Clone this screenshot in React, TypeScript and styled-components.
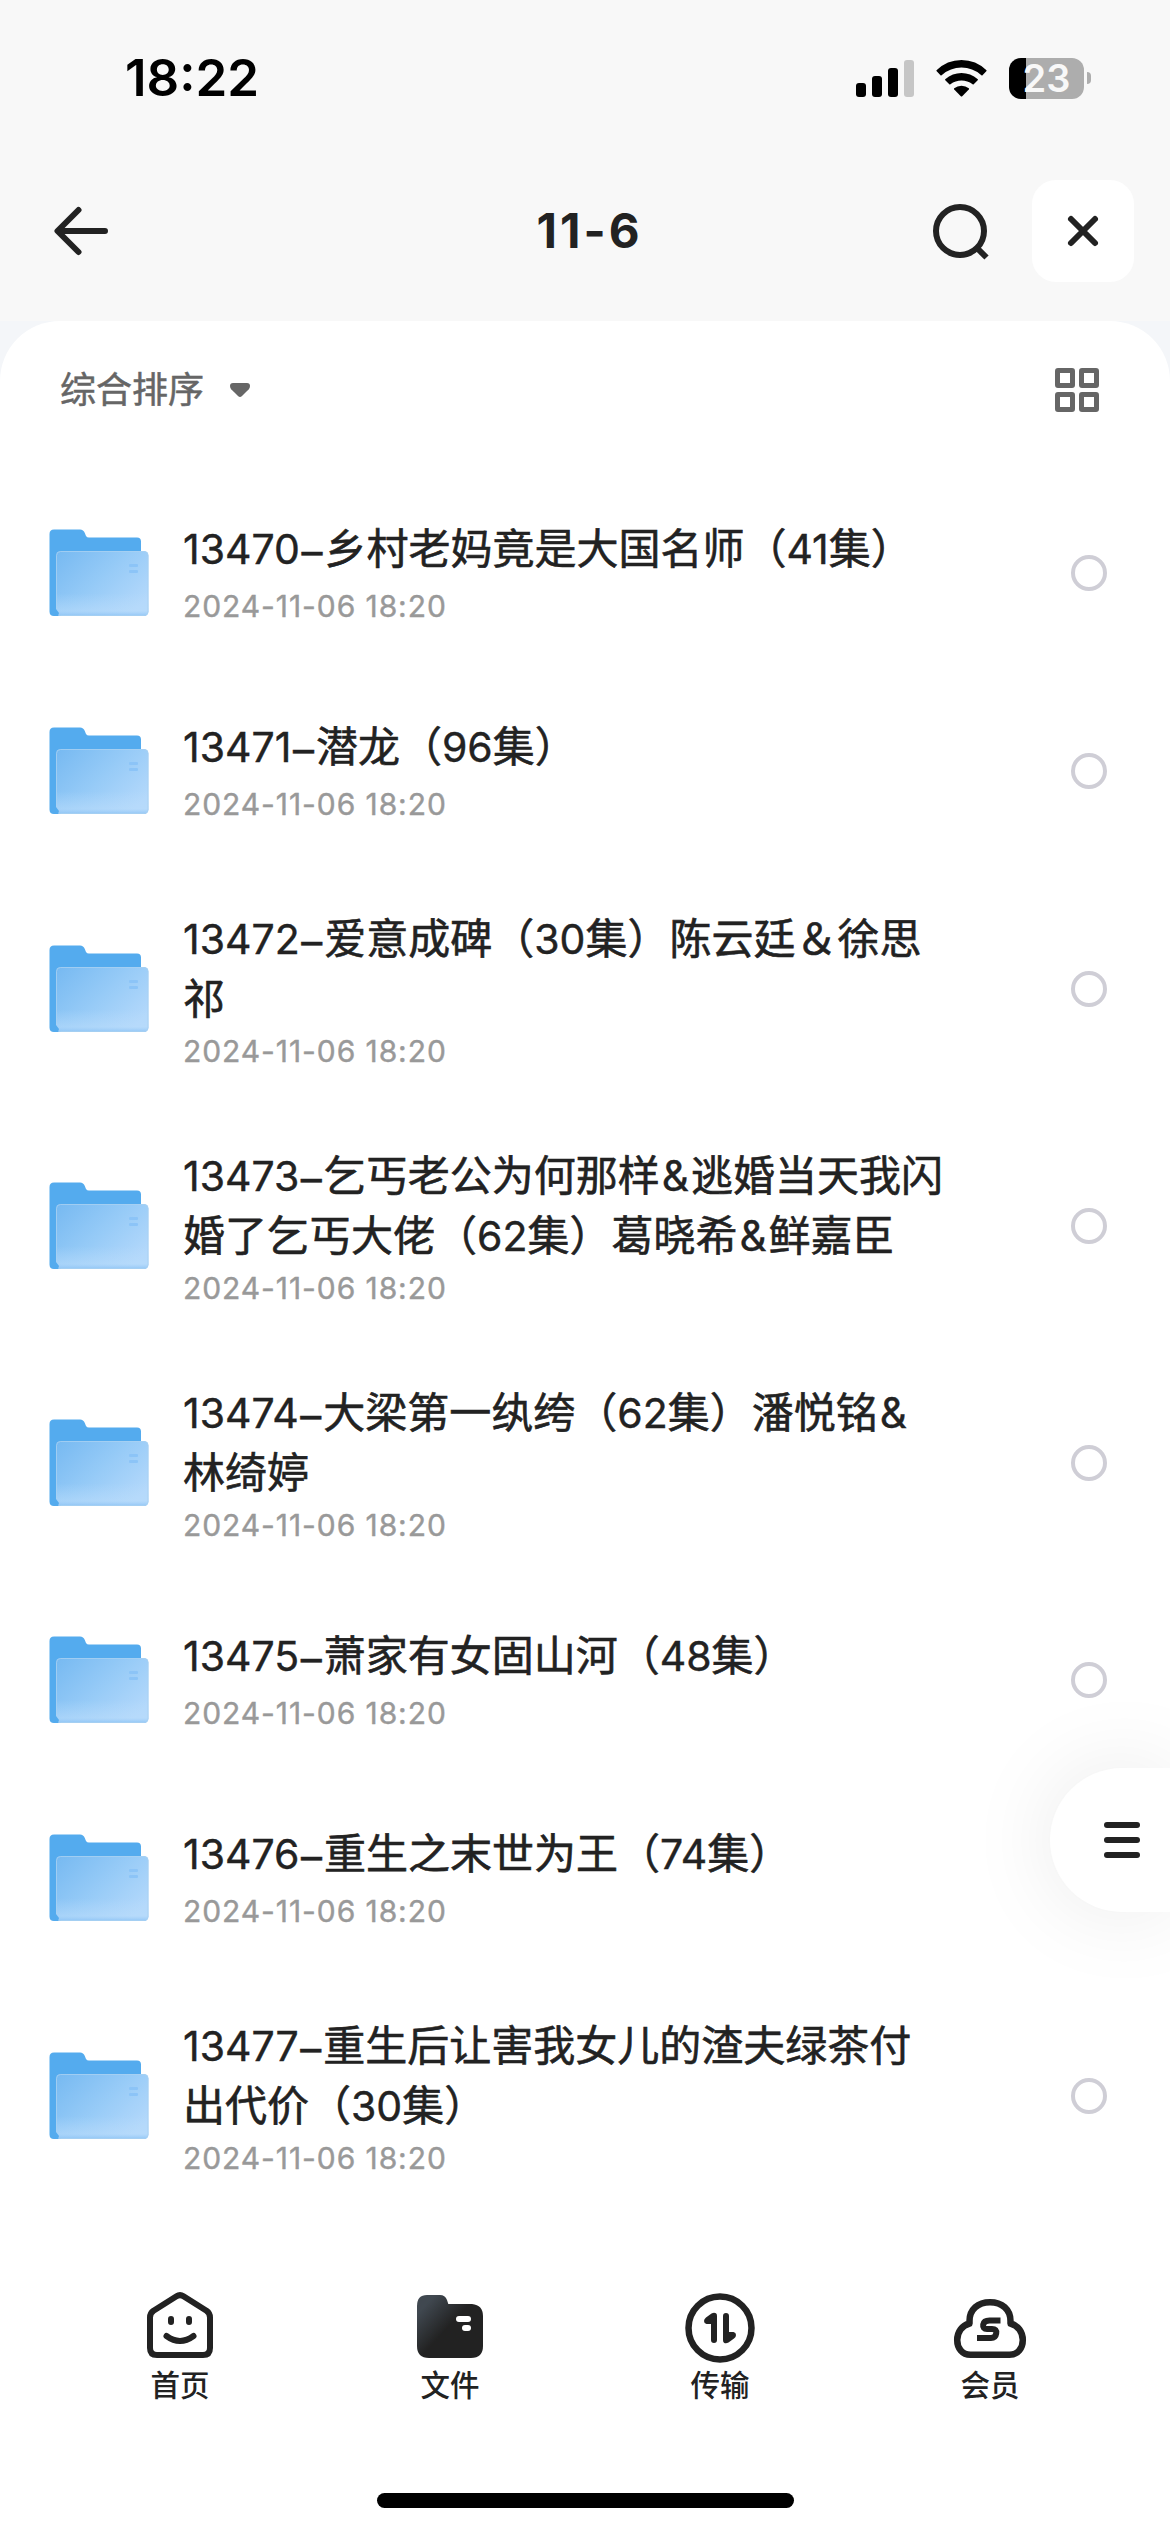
import React from "react";
import styled, { createGlobalStyle } from "styled-components";

const Global = createGlobalStyle`
  * { box-sizing: border-box; }
  body { margin: 0; background: #fff; }
`;

const cjk = `"Noto Sans CJK SC", sans-serif`;
const latin = `Inter, "Noto Sans CJK SC", sans-serif`;

const Screen = styled.div`
  width: 1170px;
  height: 2532px;
  display: flex;
  flex-direction: column;
  position: relative;
  overflow: hidden;
  background: #fff;
  color: #222;
  font-family: ${cjk};
`;

const StatusBar = styled.header`
  height: 156px;
  padding: 0 79px 0 125px;
  display: flex;
  align-items: center;
  justify-content: space-between;
  background: #f8f8f8;
`;

const Clock = styled.time`
  font: 600 51px/60px ${latin};
  color: #000;
`;

const StatusIcons = styled.div`
  display: flex;
  align-items: center;
  gap: 22px;
`;

const Battery = styled.div`
  display: flex;
  align-items: center;
  gap: 3px;
`;

const BatteryBody = styled.div`
  width: 75px;
  height: 41px;
  border-radius: 12px;
  background: linear-gradient(90deg, #000 17px, #adadad 17px);
  color: #f8f8f8;
  font: 600 38px/41px ${latin};
  text-align: center;
`;

const BatteryTip = styled.div`
  width: 4px;
  height: 12px;
  border-radius: 0 4px 4px 0;
  background: #adadad;
`;

const NavBar = styled.nav`
  height: 165px;
  padding: 24px 36px 39px 51px;
  display: grid;
  grid-template-columns: 1fr auto 1fr;
  align-items: center;
  background: #f8f8f8;
`;

const NavTitle = styled.h1`
  margin: 0;
  padding-right: 6px;
  font: 700 47.5px/60px ${latin};
  letter-spacing: 3px;
`;

const NavActions = styled.div`
  display: flex;
  align-items: center;
  justify-content: flex-end;
  gap: 42px;
`;

const IconButton = styled.button`
  display: flex;
  padding: 0;
  border: 0;
  background: none;
`;

const CloseButton = styled(IconButton)`
  width: 102px;
  height: 102px;
  align-items: center;
  justify-content: center;
  border-radius: 24px;
  background: #fff;
`;

const PanelBackdrop = styled.main`
  background: linear-gradient(#f4f6f9 0 80px, #fff 80px);
`;

const Panel = styled.section`
  border-radius: 60px 60px 0 0;
  background: #fff;
`;

const Toolbar = styled.div`
  height: 153px;
  padding: 0 71px 16px 60px;
  display: flex;
  align-items: center;
  justify-content: space-between;
`;

const Sort = styled.div`
  display: flex;
  align-items: center;
  gap: 26px;
`;

const SortLabel = styled.span`
  margin-bottom: 5px;
  color: #666;
  font-size: 36px;
  line-height: 44px;
  -webkit-text-stroke: 0.5px #666;
`;

const List = styled.ul`
  margin: 0;
  padding: 0;
  list-style: none;
`;

const Row = styled.li<{ $tall: boolean }>`
  height: ${(p) => (p.$tall ? 237 : 198)}px;
  padding: 0 63px 0 49px;
  display: flex;
  align-items: center;
`;

const RowText = styled.div<{ $tall: boolean }>`
  flex: 1;
  margin-left: 34px;
  padding-bottom: ${(p) => (p.$tall ? 0 : 3)}px;
  display: flex;
  flex-direction: column;
  gap: ${(p) => (p.$tall ? 4 : 9)}px;
`;

const RowTitle = styled.div`
  font-size: 42px;
  font-weight: 400;
  line-height: 60px;
  white-space: nowrap;
  -webkit-text-stroke: 0.6px #222;
`;

const Latin = styled.span`
  font: 400 41px/0 ${latin};
  -webkit-text-stroke-width: 0.4px;
`;

const Dash = styled(Latin)`
  font-size: 42px;
  padding: 0 2px 0 1.5px;
  vertical-align: -3px;
`;

const Ampersand = styled(Latin)`
  font-size: 42px;
  padding: 0 2px;
`;

const RowDate = styled.div`
  font: 400 30px/42px ${latin};
  letter-spacing: 0.92px;
  color: #999;
  -webkit-text-stroke: 0.4px #999;
`;

const Radio = styled.span`
  width: 36px;
  height: 36px;
  border: 4px solid #cfced6;
  border-radius: 50%;
`;

const FloatingMenu = styled.button`
  position: absolute;
  right: 0;
  top: 1768px;
  width: 120px;
  height: 144px;
  padding: 0 0 0 54px;
  border: 0;
  border-radius: 72px 0 0 72px;
  background: #fff;
  box-shadow: 0 0 90px rgba(0, 0, 0, 0.085);
  display: flex;
  flex-direction: column;
  justify-content: center;
  gap: 9px;
`;

const MenuBar = styled.span`
  width: 36px;
  height: 6px;
  border-radius: 3px;
  background: #222;
`;

const TabBar = styled.footer`
  flex: 1;
  padding: 74px 45px 0;
  display: grid;
  grid-template-columns: repeat(4, 1fr);
  align-items: start;
`;

const Tab = styled.div`
  display: flex;
  flex-direction: column;
  align-items: center;
  font-size: 29.5px;
  font-weight: 500;
  line-height: 35px;
`;

const HomeStrip = styled.div`
  height: 39px;
  display: flex;
  justify-content: center;
`;

const HomeIndicator = styled.div`
  width: 417px;
  height: 15px;
  border-radius: 8px;
  background: #000;
`;

const Signal = () => (
  <svg width="58" height="37" viewBox="0 0 58 37">
    <rect x="0" y="23" width="10" height="14" rx="3" />
    <rect x="16" y="16" width="10" height="21" rx="3" />
    <rect x="32" y="8" width="10" height="29" rx="3" />
    <rect x="48" y="0" width="10" height="37" rx="3" fill="#c6c6c6" />
  </svg>
);

const Wifi = () => (
  <svg width="51" height="37" viewBox="0 0 51 37">
    <path d="M0.5 10.3 Q11 0 25.5 0 Q40 0 50.5 10.3 Q50.8 10.8 50.3 11.3 L46.5 15.2 Q46 15.6 45.4 15.2 Q36.5 7.6 25.5 7.6 Q14.5 7.6 5.6 15.2 Q5 15.6 4.5 15.2 L0.7 11.3 Q0.2 10.8 0.5 10.3Z" />
    <path d="M9.2 19.2 Q16.5 13 25.5 13 Q34.5 13 41.8 19.2 Q42.2 19.7 41.7 20.2 L37.7 24.3 Q37.2 24.7 36.6 24.3 Q31.5 20.6 25.5 20.6 Q19.5 20.6 14.4 24.3 Q13.8 24.7 13.3 24.3 L9.3 20.2 Q8.8 19.7 9.2 19.2Z" />
    <path d="M18.2 28.2 Q21.3 25.7 25.5 25.7 Q29.7 25.7 32.8 28.2 Q33.3 28.8 32.8 29.4 L26.2 36.2 Q25.5 36.9 24.8 36.2 L18.2 29.4 Q17.7 28.8 18.2 28.2Z" />
  </svg>
);

const BackIcon = () => (
  <svg width="60" height="60" viewBox="0 0 60 60" fill="none" stroke="#222" strokeWidth="6" strokeLinecap="round" strokeLinejoin="round">
    <path d="M54 30H7M27.5 9L6.500 30L27.5 51" />
  </svg>
);

const SearchIcon = () => (
  <svg width="60" height="60" viewBox="0 0 60 60" fill="none" stroke="#222" strokeWidth="6">
    <circle cx="30" cy="30" r="24" />
    <path d="M46.5 46.5L56.5 56.5" />
  </svg>
);

const CloseIcon = () => (
  <svg width="36" height="36" viewBox="0 0 36 36" stroke="#222" strokeWidth="6" strokeLinecap="round">
    <path d="M6 6L30 30M30 6L6 30" />
  </svg>
);

const Caret = () => (
  <svg width="20" height="14" viewBox="0 0 20 14" fill="#666">
    <path d="M3 0H17Q20 0 20 3Q20 4.8 18.8 6.2L12 13Q10 14.8 8 13L1.2 6.2Q0 4.8 0 3Q0 0 3 0Z" />
  </svg>
);

const GridIcon = () => (
  <svg width="44" height="44" viewBox="0 0 44 44" fill="none" stroke="#666" strokeWidth="5">
    <rect x="2.5" y="2.5" width="15" height="15" rx="0.5" />
    <rect x="26.5" y="2.5" width="15" height="15" rx="0.5" />
    <rect x="2.5" y="26.5" width="15" height="15" rx="0.5" />
    <rect x="26.5" y="26.5" width="15" height="15" rx="0.5" />
  </svg>
);

const FolderIcon = () => (
  <svg width="100" height="88" viewBox="0 0 100 88">
    <defs>
      <linearGradient id="front" x1="0" y1="0" x2="1" y2="0.7">
        <stop offset="0" stopColor="#76b9f1" />
        <stop offset="0.55" stopColor="#97cbf7" />
        <stop offset="1" stopColor="#b3d8fb" />
      </linearGradient>
      <linearGradient id="shade" x1="0" y1="0" x2="0" y2="1">
        <stop offset="0.65" stopColor="#b9dcfb" stopOpacity="0" />
        <stop offset="0.92" stopColor="#b9dcfb" stopOpacity="0.55" />
        <stop offset="1" stopColor="#8cc3f5" stopOpacity="0.9" />
      </linearGradient>
    </defs>
    <path d="M5 0.5H31Q34.5 0.5 35.8 4L37 7Q38 8.5 40 8.5H88Q92 8.5 92 12.5V40H10V87H5Q0.5 87 0.5 82.5V5Q0.5 0.5 5 0.5Z" fill="#54abee" />
    <rect x="7" y="22" width="92.5" height="65" rx="4.5" fill="url(#front)" />
    <rect x="7" y="22" width="92.5" height="65" rx="4.5" fill="url(#shade)" />
    <rect x="7.5" y="22.5" width="91.5" height="64" rx="4" fill="none" stroke="#a9d1f1" strokeOpacity="0.8" />
    <path d="M7 80V83Q7 87 3.5 87H9L10 84Z" fill="#54abee" />
    <rect x="80" y="35" width="9" height="3" rx="1" fill="#8cc4f7" />
    <rect x="80" y="41" width="9" height="3" rx="1" fill="#8cc4f7" />
  </svg>
);

const HomeIcon = () => (
  <svg width="72" height="78" viewBox="0 0 72 78" fill="none" stroke="#222" strokeWidth="6" strokeLinecap="round" strokeLinejoin="round">
    <path d="M32.5 8.3Q36 6 39.5 8.3L62.5 22.8Q66 25.3 66 29.5V60Q66 67 59 67H13Q6 67 6 60V29.5Q6 25.3 9.5 22.8Z" />
    <path d="M27 31V34M45 31V34" />
    <path d="M22.5 48Q36 58 49.5 48" />
  </svg>
);

const FilesIcon = () => (
  <svg width="72" height="78" viewBox="0 0 72 78">
    <defs>
      <linearGradient id="files" x1="0.05" y1="0.12" x2="0.48" y2="0.5">
        <stop offset="0.15" stopColor="#404850" />
        <stop offset="1" stopColor="#222" />
      </linearGradient>
    </defs>
    <path d="M13 7H26Q31 7 33 12L34.3 16H58Q69 17 69 28V58Q69 70 57 70H15Q3 70 3 58V18Q3 7 13 7Z" fill="url(#files)" />
    <rect x="42" y="28" width="15" height="6" rx="3" fill="#fff" />
    <rect x="48" y="37" width="9" height="6" rx="3" fill="#fff" />
  </svg>
);

const TransferIcon = () => (
  <svg width="72" height="78" viewBox="0 0 72 78" fill="#222">
    <circle cx="36" cy="40" r="31.5" fill="none" stroke="#222" strokeWidth="6.5" />
    <path d="M27.5 25.5Q30 24 32 25.2Q33 26 33 28V52Q33 55 30 55Q27 55 27 52V36H22.5Q20 35.5 20 33Q20 31 22 29.5Z" />
    <path d="M44.5 54.5Q42 56 40 54.8Q39 54 39 52V28Q39 25 42 25Q45 25 45 28V44H49.5Q52 44.5 52 47Q52 49 50 50.5Z" />
  </svg>
);

const MemberIcon = () => (
  <svg width="78" height="78" viewBox="0 0 78 78" fill="none" stroke="#222" strokeWidth="6.5">
    <path d="M19.5 66.8C11 66.8 6.200 60 6.200 52C6.200 44 11 37.5 18.5 35.5V33C18.5 21.5 27 14.2 39 14.2C51 14.2 59.5 21.5 59.5 33V35.5C67 37.5 71.8 44 71.8 52C71.8 60 67 66.8 58.5 66.8Z" strokeLinejoin="round" />
    <path d="M49.5 32.500H38.500Q33 32.500 32.200 36.500Q31.500 41 36 41H41Q46 41 45.200 45.500Q44.500 50 40 50H26" strokeWidth="6" />
  </svg>
);

const splitRuns = (line: string) => line.split(/([0-9]+|–|&)/).filter(Boolean);

const TitleRun = ({ run }: { run: string }) => {
  if (run === "–") return <Dash>{run}</Dash>;
  if (run === "&") return <Ampersand>{run}</Ampersand>;
  if (/^[0-9]/.test(run)) return <Latin>{run}</Latin>;
  return <>{run}</>;
};

const TitleLine = ({ text }: { text: string }) => (
  <div>
    {splitRuns(text).map((run, i) => <TitleRun key={i} run={run} />)}
  </div>
);

const files: string[][] = [
  ["13470–乡村老妈竟是大国名师（41集）"],
  ["13471–潜龙（96集）"],
  ["13472–爱意成碑（30集）陈云廷＆徐思", "祁"],
  ["13473–乞丐老公为何那样&逃婚当天我闪", "婚了乞丐大佬（62集）葛晓希&鲜嘉臣"],
  ["13474–大梁第一纨绔（62集）潘悦铭&", "林绮婷"],
  ["13475–萧家有女固山河（48集）"],
  ["13476–重生之末世为王（74集）"],
  ["13477–重生后让害我女儿的渣夫绿茶付", "出代价（30集）"],
];

const tabs = [
  { label: "首页", Icon: HomeIcon },
  { label: "文件", Icon: FilesIcon },
  { label: "传输", Icon: TransferIcon },
  { label: "会员", Icon: MemberIcon },
];

export default function App() {
  return (
    <Screen>
      <Global />
      <StatusBar>
        <Clock>18:22</Clock>
        <StatusIcons>
          <Signal />
          <Wifi />
          <Battery>
            <BatteryBody>23</BatteryBody>
            <BatteryTip />
          </Battery>
        </StatusIcons>
      </StatusBar>
      <NavBar>
        <IconButton><BackIcon /></IconButton>
        <NavTitle>11-6</NavTitle>
        <NavActions>
          <IconButton><SearchIcon /></IconButton>
          <CloseButton><CloseIcon /></CloseButton>
        </NavActions>
      </NavBar>
      <PanelBackdrop>
        <Panel>
          <Toolbar>
            <Sort><SortLabel>综合排序</SortLabel><Caret /></Sort>
            <GridIcon />
          </Toolbar>
          <List>
            {files.map((lines) => {
              const tall = lines.length > 1;
              return (
                <Row key={lines[0]} $tall={tall}>
                  <FolderIcon />
                  <RowText $tall={tall}>
                    <RowTitle>
                      {lines.map((line) => <TitleLine key={line} text={line} />)}
                    </RowTitle>
                    <RowDate>2024-11-06 18:20</RowDate>
                  </RowText>
                  <Radio />
                </Row>
              );
            })}
          </List>
        </Panel>
      </PanelBackdrop>
      <TabBar>
        {tabs.map(({ label, Icon }) => (
          <Tab key={label}><Icon />{label}</Tab>
        ))}
      </TabBar>
      <HomeStrip><HomeIndicator /></HomeStrip>
      <FloatingMenu><MenuBar /><MenuBar /><MenuBar /></FloatingMenu>
    </Screen>
  );
}
